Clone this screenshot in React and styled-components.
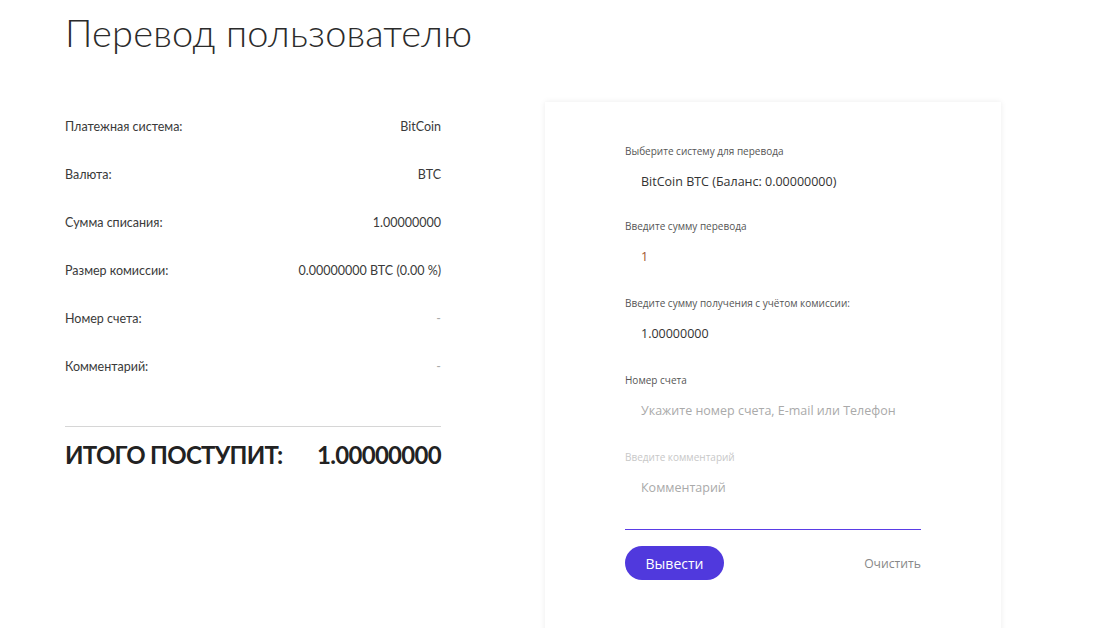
import React from "react";
import styled, { createGlobalStyle } from "styled-components";

const Global = createGlobalStyle`
  html, body { margin: 0; padding: 0; background: #fff; }
  body { font-family: "Lato", "Open Sans", sans-serif; color: #333; }
  * { box-sizing: border-box; }
`;

const Page = styled.div`
  padding: 0 0 0 65px;
  width: 1107px;
  height: 628px;
  overflow: hidden;
`;

const Title = styled.h1`
  margin: 0;
  padding-top: 9px;
  font-family: "Lato", sans-serif;
  font-weight: 300;
  font-size: 38px;
  line-height: 46px;
  color: #2b2b2b;
  letter-spacing: 0.2px;
`;

const Columns = styled.div`
  display: flex;
  align-items: flex-start;
  gap: 104px;
  margin-top: 39px;
`;

const Summary = styled.div`
  width: 376px;
  padding-top: 8px;
`;

const Row = styled.div`
  display: flex;
  justify-content: space-between;
  align-items: center;
  height: 48px;
  font-family: "Lato", sans-serif;
  font-size: 12.5px;
  color: #3a3a3a;
`;

const Value = styled.span`
  color: ${(p) => (p.$muted ? "#aaa" : "#3a3a3a")};
`;

const Divider = styled.hr`
  margin: 36px 0 0;
  border: 0;
  border-top: 1px solid #d6d6d6;
`;

const Total = styled.div`
  display: flex;
  justify-content: space-between;
  align-items: center;
  margin-top: 13px;
  font-family: "Lato", sans-serif;
  font-weight: 700;
  font-size: 24px;
  letter-spacing: -0.7px;
  color: #222;
`;

const Card = styled.div`
  width: 456px;
  height: 560px;
  margin-top: 8px;
  background: #fff;
  box-shadow: 0 0 6px rgba(0, 0, 0, 0.08);
  padding: 42px 80px 0;
  font-family: "Open Sans", sans-serif;
`;

const Field = styled.div`
  display: flex;
  flex-direction: column;
  height: ${(p) => (p.$first ? "75px" : "77px")};
`;

const Label = styled.label`
  font-size: 10px;
  line-height: 14px;
  color: ${(p) => (p.$disabled ? "#c8c8c8" : "#555")};
`;

const Input = styled.div`
  margin-top: 15px;
  padding-left: 16px;
  font-size: 12.5px;
  line-height: 18px;
  color: ${(p) => (p.$placeholder ? "#aaa" : p.$accent ? "#a0522d" : "#333")};
`;

const Underline = styled.div`
  margin-top: 2px;
  height: 1px;
  background: #5a3de6;
`;

const Actions = styled.div`
  display: flex;
  justify-content: space-between;
  align-items: center;
  margin-top: 16px;
`;

const Submit = styled.button`
  width: 99px;
  height: 34px;
  border: 0;
  border-radius: 17px;
  background: #5039dd;
  color: #fff;
  font-family: "Open Sans", sans-serif;
  font-size: 14px;
  cursor: pointer;
`;

const Clear = styled.button`
  border: 0;
  background: none;
  padding: 0;
  font-family: "Open Sans", sans-serif;
  font-size: 12.2px;
  color: #888;
  cursor: pointer;
`;

const rows = [
  ["Платежная система:", "BitCoin"],
  ["Валюта:", "BTC"],
  ["Сумма списания:", "1.00000000"],
  ["Размер комиссии:", "0.00000000 BTC (0.00 %)"],
  ["Номер счета:", "-", true],
  ["Комментарий:", "-", true],
];

export default function App() {
  return (
    <>
      <Global />
      <Page>
        <Title>Перевод пользователю</Title>
        <Columns>
          <Summary>
            {rows.map(([l, v, m]) => (
              <Row key={l}>
                <span>{l}</span>
                <Value $muted={m}>{v}</Value>
              </Row>
            ))}
            <Divider />
            <Total>
              <span>ИТОГО ПОСТУПИТ:</span>
              <span>1.00000000</span>
            </Total>
          </Summary>
          <Card>
            <Field $first>
              <Label>Выберите систему для перевода</Label>
              <Input>BitCoin BTC (Баланс: 0.00000000)</Input>
            </Field>
            <Field>
              <Label>Введите сумму перевода</Label>
              <Input $accent>1</Input>
            </Field>
            <Field>
              <Label>Введите сумму получения с учётом комиссии:</Label>
              <Input>1.00000000</Input>
            </Field>
            <Field>
              <Label>Номер счета</Label>
              <Input $placeholder>Укажите номер счета, E-mail или Телефон</Input>
            </Field>
            <Field>
              <Label $disabled>Введите комментарий</Label>
              <Input $placeholder>Комментарий</Input>
            </Field>
            <Underline />
            <Actions>
              <Submit>Вывести</Submit>
              <Clear>Очистить</Clear>
            </Actions>
          </Card>
        </Columns>
      </Page>
    </>
  );
}
